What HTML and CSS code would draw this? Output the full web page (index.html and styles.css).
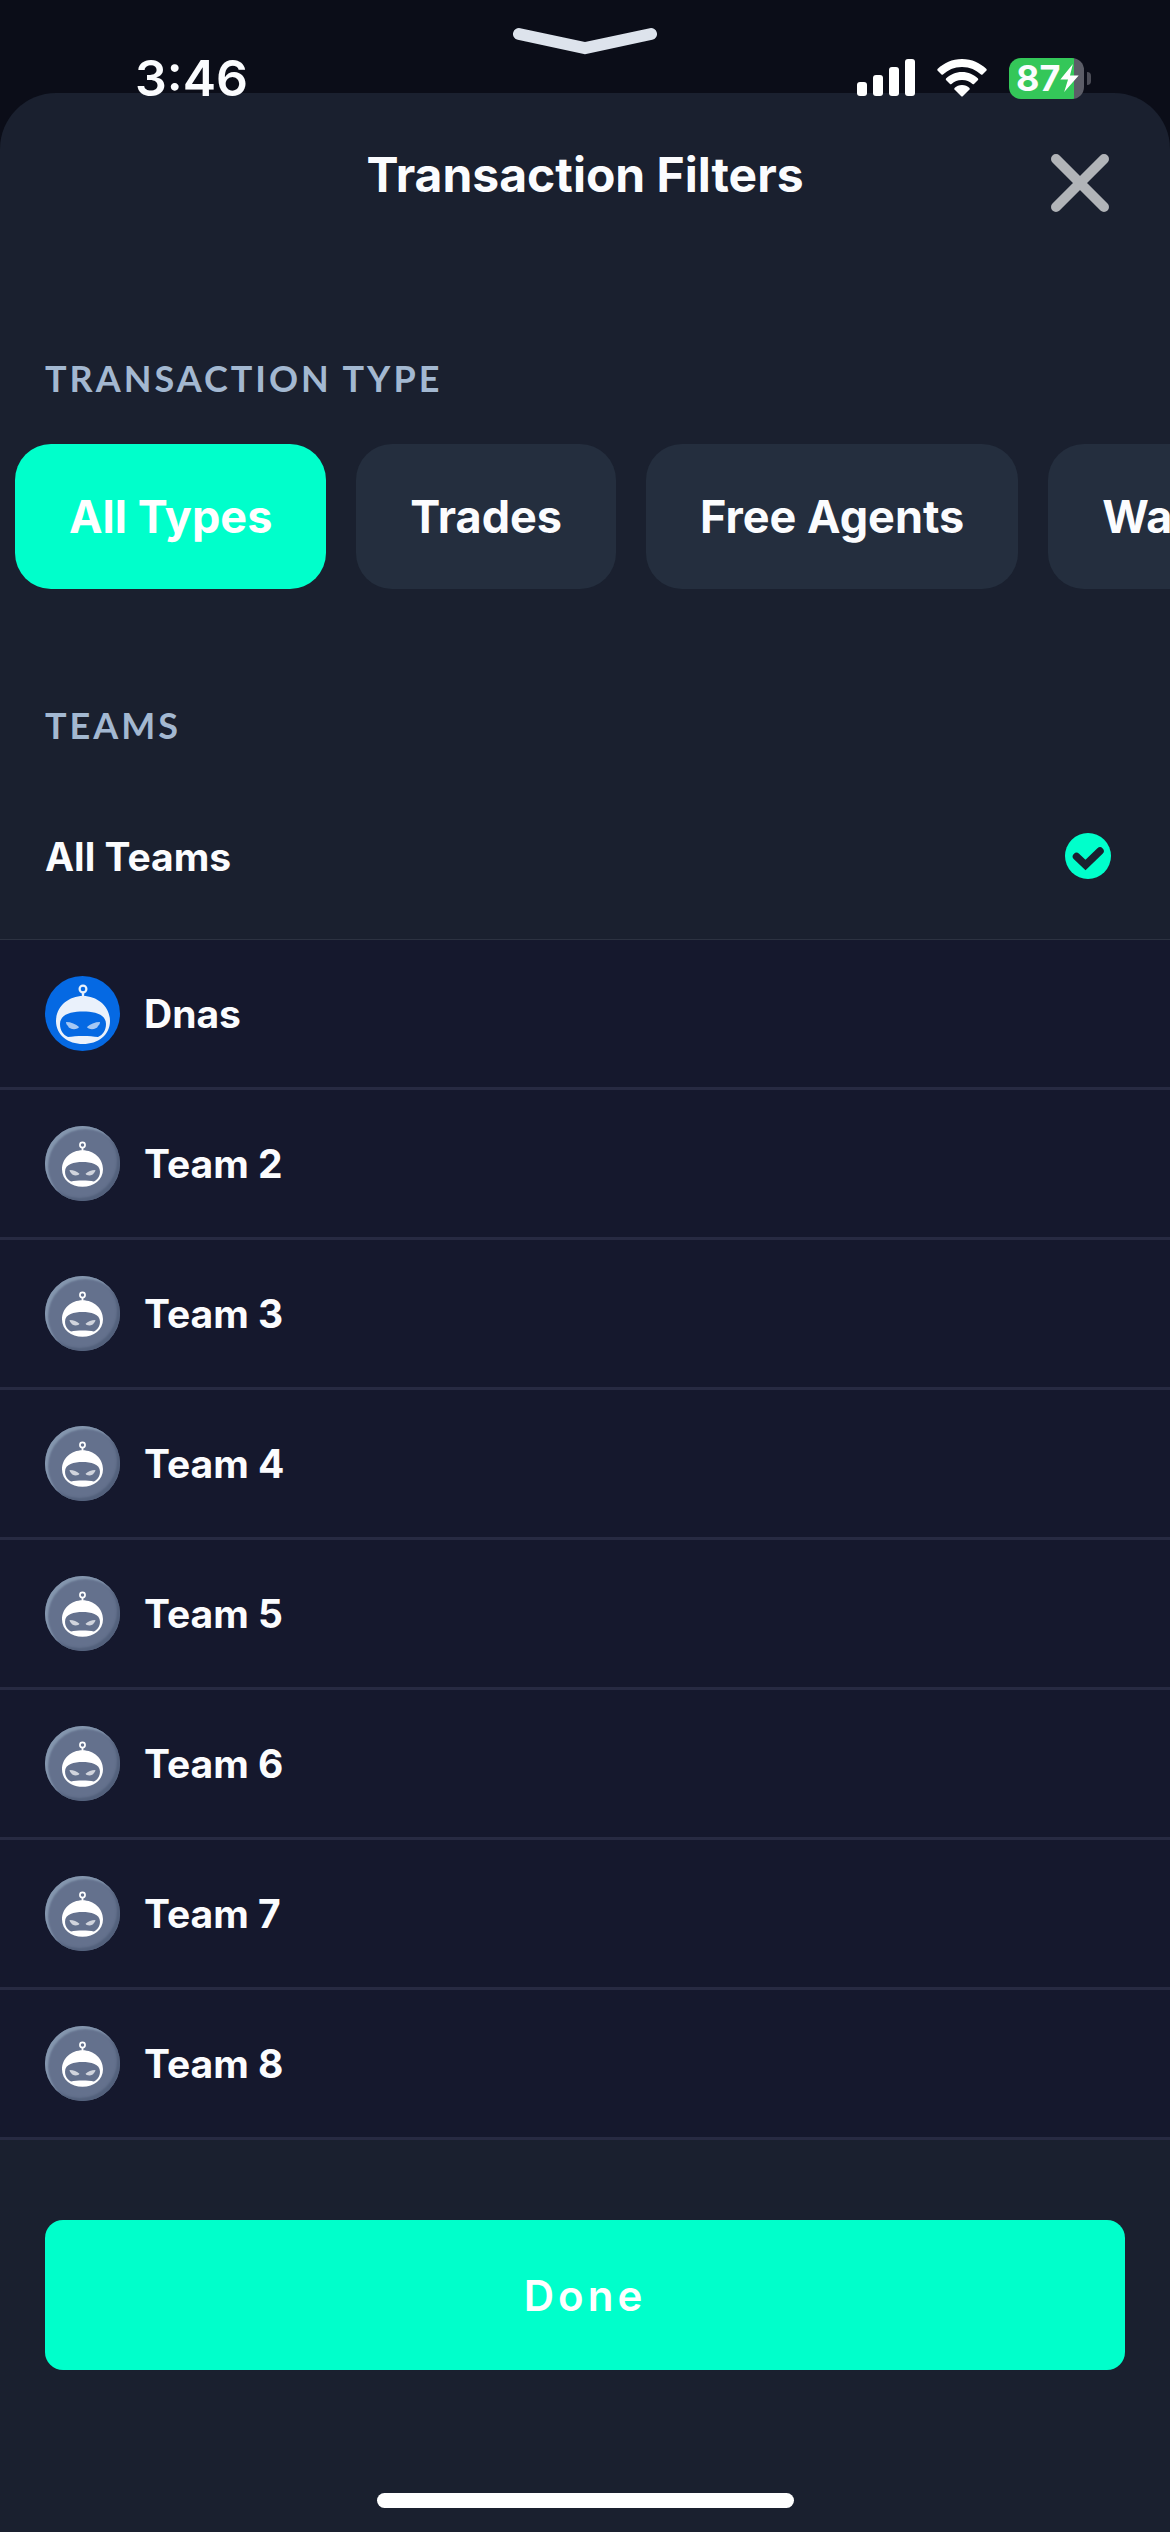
FILE: index.html
```html
<!DOCTYPE html>
<html lang="en">
<head>
  <meta charset="UTF-8" />
  <meta name="viewport" content="width=device-width, initial-scale=1.0"/>
  <title>Transaction Filters</title>
  <link rel="stylesheet" href="styles.css">
</head>
<body>

  <!-- Shared avatar artwork -->
  <svg class="defs" width="0" height="0" aria-hidden="true">
    <symbol id="bot" viewBox="0 0 54 60">
      <circle cx="27" cy="5" r="3.4" fill="none" stroke="currentColor" stroke-width="2.2"/>
      <path d="M27 8.5V14" stroke="currentColor" stroke-width="2.4"/>
      <path fill="currentColor" fill-rule="evenodd" d="M27 12C42 12 54 23 54 37C54 51 42 60 27 60C12 60 0 51 0 37C0 23 12 12 27 12ZM27 27.500C16 27.500 4 30 4 40C4 46 7 51 12 53C20 51.500 34 51.500 42 53C47 51 50 46 50 40C50 30 38 27.500 27 27.500Z"/>
      <path fill="currentColor" opacity=".7" d="M10 38C15 38 20 40 23 43C22 46 13 46 12 42C11 41 10 40 10 38ZM44 38C39 38 34 40 31 43C32 46 41 46 42 42C43 41 44 40 44 38Z"/>
    </symbol>
  </svg>

  <!-- Status bar -->
  <div class="status-bar">
    <span class="time">3:46</span>
    <div class="status-icons">
      <svg class="signal" viewBox="0 0 58 38" fill="#fff" aria-hidden="true">
        <rect x="0" y="23" width="10" height="14" rx="3"/>
        <rect x="16" y="16" width="10" height="21" rx="3"/>
        <rect x="32" y="8" width="10" height="29" rx="3"/>
        <rect x="48" y="0" width="10" height="37" rx="3"/>
      </svg>
      <svg class="wifi" viewBox="0 0 50 38" fill="#fff" aria-hidden="true">
        <path d="M25 0C35 0 43 4 49.500 10Q50 11 49.500 11.500L45.500 15.500Q45 16 44 15.500C39 11 33 8 25 8S11 11 6 15.500Q5 16 4.500 15.500L.5 11.500Q0 11 .5 10C7 4 15 0 25 0Z"/>
        <path d="M25 13C31.500 13 36.500 15.500 41 19.500Q41.500 20.500 41 21L37 25Q36.500 25.500 35.500 25C32.500 22.500 29.500 21 25 21S17.500 22.500 14.500 25Q13.500 25.500 13 25L9 21Q8.500 20.500 9 19.500C13.500 15.500 18.500 13 25 13Z"/>
        <path d="M25 26C28 26 30.500 27 32.500 29Q33 30 32.500 30.500L26 37Q25 38 24 37L17.500 30.500Q17 30 17.500 29C19.500 27 22 26 25 26Z"/>
      </svg>
      <div class="battery">
        <span class="level">87</span>
        <svg class="bolt" viewBox="0 0 19 29" fill="#fff" aria-hidden="true">
          <path d="M13 0L0 16H8L4 29L19 12H10L13 0Z"/>
        </svg>
      </div>
    </div>
  </div>

  <button class="grabber" aria-label="Collapse">
    <svg width="144" height="28" viewBox="0 0 144 28" fill="none" stroke="#dde3ec" stroke-width="12" stroke-linecap="round">
      <path d="M6 7L72 21L138 7"/>
    </svg>
  </button>

  <!-- Filter sheet -->
  <main class="sheet">
    <header class="sheet-header">
      <h1>Transaction Filters</h1>
      <button class="close" aria-label="Close">
        <svg width="58" height="58" viewBox="0 0 58 58" fill="none" stroke="#b1b4b8" stroke-width="10" stroke-linecap="round">
          <path d="M5 5L53 53M53 5L5 53"/>
        </svg>
      </button>
    </header>

    <h2>TRANSACTION TYPE</h2>
    <div class="chips">
      <button class="chip active">All Types</button>
      <button class="chip">Trades</button>
      <button class="chip">Free Agents</button>
      <button class="chip">Waivers</button>
    </div>

    <h2>TEAMS</h2>
    <button class="all-teams">
      All Teams
      <svg width="46" height="46" viewBox="0 0 46 46" aria-hidden="true">
        <circle cx="23" cy="23" r="23" fill="#00ffcb"/>
        <path d="M11.500 23.500L20.500 32L35 18" fill="none" stroke="#1a202f" stroke-width="7.500" stroke-linecap="round"/>
      </svg>
    </button>

    <ul class="teams">
      <li><button class="team"><span class="avatar blue"><svg><use href="#bot"/></svg></span>Dnas</button></li>
      <li><button class="team"><span class="avatar"><svg><use href="#bot"/></svg></span>Team 2</button></li>
      <li><button class="team"><span class="avatar"><svg><use href="#bot"/></svg></span>Team 3</button></li>
      <li><button class="team"><span class="avatar"><svg><use href="#bot"/></svg></span>Team 4</button></li>
      <li><button class="team"><span class="avatar"><svg><use href="#bot"/></svg></span>Team 5</button></li>
      <li><button class="team"><span class="avatar"><svg><use href="#bot"/></svg></span>Team 6</button></li>
      <li><button class="team"><span class="avatar"><svg><use href="#bot"/></svg></span>Team 7</button></li>
      <li><button class="team"><span class="avatar"><svg><use href="#bot"/></svg></span>Team 8</button></li>
    </ul>

    <footer class="sheet-footer">
      <button class="done">Done</button>
    </footer>
    <div class="home-indicator"></div>
  </main>

</body>
</html>
```

FILE: styles.css
```css
* {
  box-sizing: border-box;
  margin: 0;
  padding: 0;
}

body {
  position: relative;
  min-height: 100vh;
  padding-top: 93px;
  display: flex;
  flex-direction: column;
  background: #0b0d18;
  color: #fbfcfe;
  font-family: Inter, 'Liberation Sans', sans-serif;
}

button {
  background: none;
  border: none;
  color: inherit;
  font-family: inherit;
  cursor: pointer;
}

svg {
  display: block;
}

.defs {
  position: absolute;
}

/* Status bar, floats over the top edge of the sheet */
.status-bar {
  position: absolute;
  top: 48px;
  left: 0;
  right: 0;
  z-index: 1;
  height: 60px;
  padding: 0 79px 0 135px;
  display: flex;
  align-items: center;
  justify-content: space-between;
}

.time {
  font-size: 50px;
  font-weight: 600;
  line-height: 60px;
}

.status-icons {
  display: flex;
  align-items: center;
  gap: 22px;
}

.signal {
  width: 58px;
  height: 38px;
}

.wifi {
  width: 50px;
  height: 38px;
}

.battery {
  position: relative;
  width: 75px;
  height: 41px;
  padding-left: 7px;
  display: flex;
  align-items: center;
  border-radius: 12px;
  background: linear-gradient(to right, #34c759 65px, #5c5d67 65px);
  margin-right: 7px;
}

.battery::after {
  content: '';
  position: absolute;
  left: 78px;
  top: 14px;
  width: 4px;
  height: 13px;
  border-radius: 0 4px 4px 0;
  background: #4c4d57;
}

.level {
  font-size: 36px;
  font-weight: 700;
  line-height: 41px;
}

.bolt {
  width: 19px;
  height: 28px;
}

.grabber {
  position: absolute;
  top: 27px;
  left: 50%;
  margin-left: -72px;
}

/* Sheet */
.sheet {
  flex: 1;
  display: flex;
  flex-direction: column;
  overflow: hidden;
  border-radius: 56px 56px 0 0;
  background: #1a202f;
}

.sheet-header {
  display: grid;
  grid-template-columns: 1fr auto 1fr;
  align-items: start;
  padding: 52px 61px 0;
}

h1 {
  grid-column: 2;
  font-size: 48px;
  font-weight: 700;
  line-height: 60px;
}

.close {
  justify-self: end;
  padding-top: 9px;
}

h2 {
  margin-top: 144px;
  padding: 0 45px;
  color: #a3b8d1;
  font-family: Lato, Inter, sans-serif;
  font-size: 36px;
  font-weight: 700;
  line-height: 44px;
  letter-spacing: 3px;
}

.chips {
  display: flex;
  gap: 30px;
  margin: 44px 0 -30px;
  padding: 0 15px;
  overflow: hidden;
}

.chip {
  flex: none;
  height: 145px;
  padding: 0 54px;
  border-radius: 36px;
  background: #242e3e;
  font-size: 45px;
  font-weight: 700;
}

.chip.active {
  background: #00ffcb;
  color: #fff;
}

.all-teams {
  height: 166px;
  margin-top: 26px;
  padding: 0 59px 0 45px;
  display: flex;
  align-items: center;
  justify-content: space-between;
  font-size: 39px;
  font-weight: 700;
}

/* Team list */
.teams {
  list-style: none;
  border-top: 1px solid #2c3241;
  background: #15182d;
}

.team {
  width: 100%;
  height: 150px;
  padding: 0 45px;
  display: flex;
  align-items: center;
  gap: 24px;
  border-bottom: 3px solid #272a42;
  font-size: 39px;
  font-weight: 700;
}

.avatar {
  width: 75px;
  height: 75px;
  display: flex;
  align-items: center;
  justify-content: center;
  border-radius: 50%;
  background: #64718d;
  box-shadow: inset 3px 3px 2px #8496ae, inset -3px -3px 2px #53617c;
  color: #fff;
}

.avatar svg {
  width: 41px;
  height: 46px;
}

.avatar.blue {
  background: #0569e3;
  box-shadow: none;
  color: #eaf1fb;
}

.avatar.blue svg {
  width: 54px;
  height: 60px;
}

.sheet-footer {
  padding: 80px 45px 0;
}

.done {
  width: 100%;
  height: 150px;
  border-radius: 18px;
  background: #00ffcb;
  color: #fff;
  font-size: 42px;
  font-weight: 600;
  letter-spacing: 4px;
}

.home-indicator {
  width: 417px;
  height: 15px;
  margin: auto auto 24px;
  border-radius: 8px;
  background: #fff;
}
```
